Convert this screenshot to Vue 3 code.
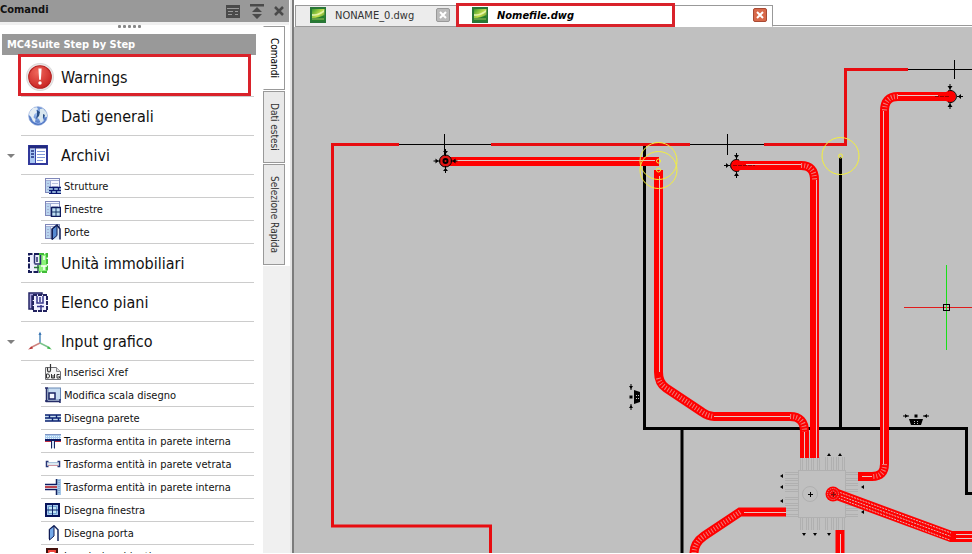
<script setup>
import { ref } from 'vue'

const tree = [
  { label: 'Warnings', icon: 'warning' },
  { label: 'Dati generali', icon: 'globe' },
  {
    label: 'Archivi',
    icon: 'archive',
    children: [
      { label: 'Strutture', icon: 'structures' },
      { label: 'Finestre', icon: 'windows' },
      { label: 'Porte', icon: 'doors' },
    ],
  },
  { label: 'Unità immobiliari', icon: 'units' },
  { label: 'Elenco piani', icon: 'floors' },
  {
    label: 'Input grafico',
    icon: 'axes',
    children: [
      { label: 'Inserisci Xref', icon: 'xref' },
      { label: 'Modifica scala disegno', icon: 'scale' },
      { label: 'Disegna parete', icon: 'wall' },
      { label: 'Trasforma entita in parete interna', icon: 'wall-t' },
      { label: 'Trasforma entità in parete vetrata', icon: 'wall-glass' },
      { label: 'Trasforma entità in parete interna', icon: 'wall-side' },
      { label: 'Disegna finestra', icon: 'window' },
      { label: 'Disegna porta', icon: 'door' },
      { label: 'Inserisci ambienti', icon: 'room' },
    ],
  },
]

const sideTabs = ['Comandi', 'Dati estesi', 'Selezione Rapida']
const activeSide = ref('Comandi')

const stubs = [0, 11, 25, 36]
const bentPipes = [
  'M658.5 170V372Q658.5 383 666 388L702 412Q708 416.5 714 416.5H790Q804.5 416.5 804.5 432V458',
  'M736 165.5H801Q814.5 165.5 814.5 180V458',
  'M950 96.5H898Q884.5 96.5 884.5 111V464Q884.5 476.5 872 476.5H858',
  'M786 512H740L704 536Q694 543 694 553V556',
]
const hatches = [
  'M658.5 378Q660 384 666 388L702 412Q708 416 714 416.5',
  'M790 416.5Q804.5 416.5 804.5 432',
  'M801 165.5Q814.5 165.5 814.5 180',
  'M898 96.5Q884.5 96.5 884.5 111',
  'M884.5 464Q884.5 476.5 872 476.5',
  'M740 512L704 536Q694 543 694 553',
]
const seams = [
  'M456 160.5H655',
  'M659.5 176V372',
  'M714 416.5H790',
  'M804.5 432V458',
  'M746 164.5H801',
  'M816.5 180V458',
  'M898 95.5H938',
  'M883.5 111V464',
  'M862 476.5H872',
  'M744 512.5H786',
]
const alarms = [[658.5, 161], [658.5, 170], [840.5, 156]]
</script>

<template>
  <div class="app">
    <svg class="defs" aria-hidden="true">
      <defs>
        <radialGradient id="gRed" cx=".4" cy=".3" r=".8">
          <stop offset="0" stop-color="#f0685c" /><stop offset="1" stop-color="#c41c1c" />
        </radialGradient>
        <radialGradient id="gSea" cx=".5" cy=".4" r=".6">
          <stop offset="0" stop-color="#a8c8f8" /><stop offset="1" stop-color="#3f68b8" />
        </radialGradient>
        <linearGradient id="gDwg" x1="0" y1="0" x2="1" y2="1">
          <stop offset="0" stop-color="#3a9a2e" /><stop offset=".5" stop-color="#c8e04c" /><stop offset="1" stop-color="#1c7428" />
        </linearGradient>
      </defs>
      <symbol id="i-warning" viewBox="0 0 26 26">
        <circle cx="13" cy="13" r="12.5" fill="#ebe9e9" stroke="#dcdada" />
        <circle cx="13" cy="13" r="10.5" fill="url(#gRed)" stroke="#b52222" />
        <path d="M11.5 5h3l-.7 10.5h-1.6z" fill="#fff" /><circle cx="13" cy="18.5" r="1.6" fill="#fff" />
      </symbol>
      <symbol id="i-globe" viewBox="0 0 20 20">
        <circle cx="10" cy="10" r="9.3" fill="url(#gSea)" stroke="#8ba6dc" stroke-width=".7" />
        <path d="M1.5 6L5 2l4-.8 1 2-2 1 1 2-2.5 2-1 3 2 2-.5 3-2-1L3 11 1 9z" fill="#e4edf4" />
        <path d="M12 3l3-.5 3.5 4 .8 4-2 1-1.5-3-1 3 1 3-3 3-1.5-4-2-2 .5-4 2-1z" fill="#d8e6ee" />
        <path d="M9 4l3 2-1 4-3 3 1-4zM15 8l2 1-2 4z" fill="#294f86" />
        <path d="M3 14q7 6 14 0-6 7-14 0z" fill="#b5ccff" />
      </symbol>
      <symbol id="i-archive" viewBox="0 0 20 20">
        <rect x="1" y="1" width="18" height="18" fill="#fff" stroke="#31399b" stroke-width="2" />
        <path d="M1 2h18" stroke="#20297e" stroke-width="3" />
        <rect x="2" y="4" width="5" height="14" fill="#a9c8f3" /><path d="M7.5 3v15" stroke="#3948aa" />
        <path d="M3 6h3M3 9h3M3 12h3" stroke="#213083" stroke-width="1.5" />
        <path d="M9 6.5h8M9 9.5h8M9 12.5h8M9 15.5h6" stroke="#829bda" />
      </symbol>
      <symbol id="i-sheet" viewBox="0 0 16 16">
        <rect x=".5" y=".5" width="14" height="14" fill="#f7f8ff" stroke="#7f87b9" />
        <rect x="1" y="3" width="4" height="11" fill="#b9d4ee" />
        <path d="M1 2.5h13M5.5 2v12M2 5.5h2M2 8.5h2M2 11.5h2" stroke="#a3aed4" />
        <path d="M7 5.5h6M7 8.5h6" stroke="#bac3df" />
      </symbol>
      <symbol id="i-structures" viewBox="0 0 16 16">
        <use href="#i-sheet" /><path d="M4 9h12v6H4z" fill="#b9dcf5" />
        <path d="M4 9.5h12M4 12.5h12M4 15.5h12M8.5 9v3M13.5 9v3M6.5 12v3M11.5 12v3" stroke="#0c1970" stroke-width="1.4" />
      </symbol>
      <symbol id="i-windows" viewBox="0 0 16 16">
        <use href="#i-sheet" /><rect x="6.5" y="6.5" width="9" height="9" fill="#bfdef2" stroke="#101c5c" stroke-width="1.5" />
        <path d="M11 7v8M7 11h8" stroke="#183768" />
      </symbol>
      <symbol id="i-doors" viewBox="0 0 16 16">
        <use href="#i-sheet" /><path d="M7 15.5V5l5-4 3 4v10.5" fill="#dfe9f7" stroke="#111d54" stroke-width="1.5" />
        <path d="M7.5 5L12 1.5v10L7.5 15.5z" fill="#5689d1" stroke="#111d54" />
      </symbol>
      <symbol id="i-units" viewBox="0 0 20 20">
        <path d="M1 1h10v18H1z" fill="#eef0ff" /><path d="M11 1h8v18h-8z" fill="#8cf37a" />
        <path d="M11 1H1v18h10" fill="none" stroke="#171c58" stroke-width="2" stroke-dasharray="5 1.5" />
        <path d="M11 1h8v18h-8" fill="none" stroke="#41bb38" stroke-width="2" stroke-dasharray="5 1.5" />
        <path d="M6.500 2v8.500M9 4v5M12.500 2v9H6.500" stroke="#292f70" stroke-width="1.500" fill="none" />
        <path d="M10 12v6M6 14.500h5" stroke="#27733a" stroke-width="1.500" />
        <path d="M16 3v4M13 13h6M16 13v4" stroke="#fff" stroke-width="1.5" />
      </symbol>
      <symbol id="i-floors" viewBox="0 0 20 20">
        <path d="M1 1h13v3H4v13H1z" fill="#a8a1dd" stroke="#252665" stroke-width="1.5" />
        <rect x="5" y="3" width="14" height="16" fill="#f1f1ff" stroke="#22225f" stroke-width="2" stroke-dasharray="4 1" />
        <path d="M9 4v7h6V4M12 5v5M13 13v5M9 14.500h7" fill="none" stroke="#38388c" stroke-width="1.500" />
      </symbol>
      <symbol id="i-axes" viewBox="0 0 26 20">
        <path d="M13 12V2" stroke="#4f89bd" stroke-width="1.5" /><path d="M11.5 4L13 .5 14.500 4z" fill="#3f78b4" />
        <path d="M13 12L3 17" stroke="#cf8580" stroke-width="1.5" /><path d="M1 18.5l4-3 1 2z" fill="#b83030" />
        <path d="M13 12l10 5" stroke="#7cc48c" stroke-width="1.5" /><path d="M25 18.5l-4-3-1 2z" fill="#3cb548" />
      </symbol>
      <symbol id="i-xref" viewBox="0 0 16 16">
        <path d="M.5 3.5h11l4 4v8H.5z" fill="#f5f5f5" stroke="#6e6e72" />
        <path d="M11.5 3.5v4h4" fill="#ddd" stroke="#88888c" />
        <path d="M5.5 0v6q0 2-1.5 2t-1.5-2V3.5" fill="none" stroke="#333" stroke-width="1.2" />
        <path d="M1.5 10v4H3q1.500 0 1.500-2T3 10zM6.500 10v4h3v-4M8 11v3M14.500 10.500H12V14h2.500v-1.500H13.500" fill="none" stroke="#333" />
      </symbol>
      <symbol id="i-scale" viewBox="0 0 16 16">
        <rect x="3" y="1" width="12.5" height="12" fill="#c7dcf1" stroke="#6987b4" />
        <path d="M1.5 1v13.5H15M0 1h3M0 14h3M15 12v4" stroke="#252d69" stroke-width="1.5" fill="none" />
        <rect x="4" y="6" width="6" height="6" fill="#f4f8ff" stroke="#1b2463" stroke-width="1.5" />
      </symbol>
      <symbol id="i-wall" viewBox="0 0 16 16">
        <path d="M0 5h16v6H0z" fill="#c5dcef" />
        <path d="M0 5h16M0 8h16M0 11h16M4.5 5v3M11.5 5v3M7.5 8v3M13.5 8v3" stroke="#0b2272" stroke-width="1.4" />
      </symbol>
      <symbol id="i-wall-t" viewBox="0 0 16 16">
        <path d="M0 1h16v6H0z" fill="#a8cbec" /><path d="M0 1.500h16" stroke="#7d93c4" />
        <path d="M1 3.500h15M1 5.500h15" stroke="#e9f6ff" stroke-dasharray="1 1" />
        <path d="M0 7h16" stroke="#0b1963" stroke-width="2" /><path d="M0 8.500h6M10 8.500h6" stroke="#c02d41" />
        <path d="M6.5 8v7.500M9.5 8v7.500" stroke="#17235f" /><path d="M8 8v7" stroke="#a5c7ed" />
      </symbol>
      <symbol id="i-wall-glass" viewBox="0 0 16 16">
        <path d="M3 6.5h10" stroke="#a9c4dc" /><path d="M3 8h10" stroke="#dce8ef" stroke-width="2" /><path d="M3 9.5h10" stroke="#cf929f" />
        <path d="M3.500 5.500H1.500v5h2M12.500 5.500h2v5h-2" fill="none" stroke="#283778" stroke-width="1.500" />
      </symbol>
      <symbol id="i-wall-side" viewBox="0 0 16 16">
        <path d="M12 0h4v16h-4z" fill="#a5c6e7" /><path d="M11.5 0v6M11.5 10v6" stroke="#14235f" stroke-width="1.5" />
        <path d="M14 1v14" stroke="#5d8ac1" stroke-dasharray="1 1" />
        <path d="M0 5.5h12M0 10.5h12" stroke="#0c1a63" stroke-width="1.5" /><path d="M0 8h12" stroke="#bd4650" stroke-width="2" />
      </symbol>
      <symbol id="i-window" viewBox="0 0 16 16">
        <rect x="1" y="2" width="13" height="12" fill="#a6c9ee" stroke="#07145b" stroke-width="2" />
        <path d="M3.500 4.500h8v7h-8z" fill="#c4e6f6" stroke="#6b9fd0" />
        <path d="M7.500 3v10M2 8h11" stroke="#0c2368" />
      </symbol>
      <symbol id="i-door" viewBox="0 0 16 16">
        <path d="M4.5 14V4.5L9 .8l4 4V16" fill="#fff" stroke="#17275d" stroke-width="1.5" />
        <path d="M4.5 4.5L9 1v10l-4.5 4z" fill="#75aaea" stroke="#111c55" />
      </symbol>
      <symbol id="i-room" viewBox="0 0 16 16">
        <rect x="2" y="1" width="10" height="13" fill="#ee463c" stroke="#44100c" stroke-width="2" /><rect x="4.500" y="4" width="5" height="6" fill="#fff" />
      </symbol>
      <symbol id="i-dwg" viewBox="0 0 16 16">
        <rect width="16" height="16" fill="#287637" /><rect x="2" y="2" width="12.5" height="12" fill="url(#gDwg)" />
        <path d="M2 7q6 1 12-4v2Q9 9 2 9z" fill="#effac0" opacity=".8" /><path d="M2 11q7 0 12.5-3v6H2z" fill="#267f2b" /><path d="M2 12h12" stroke="#9fc15e" />
      </symbol>
      <symbol id="valve" viewBox="-14 -14 28 28">
        <path d="M-12 0h7M5 0h7M0 -12v7M0 5v7" stroke="#000" />
        <path d="M-10 -2.5l3 2.5-3 2.5zM10 -2.5L7 0l3 2.5zM-2.5 -10L0 -7l2.5-3zM-2.5 10L0 7l2.5 3z" fill="#000" />
      </symbol>
      <symbol id="radiator" viewBox="-13 -7 26 14">
        <path d="M-7 -1H7L5 5H-5z" fill="#000" /><path d="M-1.5 -5.5h3v3h-3z" />
        <path d="M-13 -4h6M7 -4h6" stroke="#000" /><path d="M-11 -6l3 2-3 2zM11 -6L8 -4l3 2z" />
        <path d="M-2 1.5h1M1 1.5h1M-2 3.5h1M1 3.5h1" stroke="#c0c0c0" />
      </symbol>
    </svg>

    <aside class="panel">
      <header class="panel-head">
        <h1>Comandi</h1>
        <button type="button" aria-label="Layout">
          <svg width="14" height="13"><path d="M0 0h14v13H0z" fill="#4a4a4a" /><path d="M1 3.5h12M2 6.5h5M2 9.5h4M9 6.5h3M9 9.5h3" stroke="#999" /></svg>
        </button>
        <button type="button" aria-label="Comprimi">
          <svg width="14" height="15"><path d="M0 0h14v2.5H0zM7 3l5 5H2zM2 10h10l-5 5z" fill="#4a4a4a" /></svg>
        </button>
        <button type="button" aria-label="Chiudi pannello">
          <svg width="10" height="10"><path d="M1 1l8 8M9 1L1 9" stroke="#4a4a4a" stroke-width="2.5" /></svg>
        </button>
      </header>
      <div class="panel-body">
        <div class="commands">
          <div class="grip"><i v-for="n in 5" :key="n"></i></div>
          <h2>MC4Suite Step by Step</h2>
          <ul class="tree">
            <li v-for="node in tree" :key="node.label">
              <button type="button" class="node" :class="{ marked: node.icon === 'warning' }">
                <span class="caret" :class="{ open: node.children }"></span>
                <span class="node-main">
                  <span class="icon-box">
                    <svg class="icon" :class="node.icon"><use :href="'#i-' + node.icon" /></svg>
                  </span>
                  <span>{{ node.label }}</span>
                </span>
              </button>
              <ul v-if="node.children" class="leaves">
                <li v-for="leaf in node.children" :key="leaf.icon">
                  <button type="button" class="leaf">
                    <svg width="16" height="16"><use :href="'#i-' + leaf.icon" /></svg>
                    <span>{{ leaf.label }}</span>
                  </button>
                </li>
              </ul>
            </li>
          </ul>
        </div>
        <nav class="side-tabs">
          <button
            v-for="tab in sideTabs"
            :key="tab"
            type="button"
            :class="{ active: tab === activeSide }"
            @click="activeSide = tab"
          >{{ tab }}</button>
          <div class="side-rest"></div>
        </nav>
      </div>
    </aside>

    <main class="work">
      <div class="file-tabs">
        <div class="file">
          <svg width="16" height="16"><use href="#i-dwg" /></svg>
          <button type="button" class="file-name">NONAME_0.dwg</button>
          <button type="button" class="close" aria-label="Chiudi NONAME_0.dwg">
            <svg width="8" height="8"><path d="M1 1l6 6M7 1L1 7" stroke="#fff" stroke-width="2" /></svg>
          </button>
        </div>
        <div class="file current">
          <svg width="16" height="16"><use href="#i-dwg" /></svg>
          <button type="button" class="file-name">Nomefile.dwg</button>
          <button type="button" class="close" aria-label="Chiudi Nomefile.dwg">
            <svg width="8" height="8"><path d="M1 1l6 6M7 1L1 7" stroke="#fff" stroke-width="2" /></svg>
          </button>
        </div>
        <div class="file-rest"></div>
      </div>
      <div class="canvas">
        <svg class="drawing" viewBox="294 27 678 526" preserveAspectRatio="xMinYMin slice" role="img" aria-label="Disegno">
          <!-- internal walls -->
          <path d="M644.5 146V428.5H966.5V493.5H974M682 429V556M840.5 157V428" fill="none" stroke="#000" stroke-width="3" />
          <!-- external walls and openings -->
          <path d="M399 144.5H332.5V526H490.5V556M491 144.5H690M764 144.5H845.5V69.5H908" fill="none" stroke="#e80c10" stroke-width="3" />
          <path d="M399 144.5H491M690 144.5H764M908 69.5H974M444.5 134V155M727.5 134V155M954.5 60V79" stroke="#000" />

          <!-- manifold -->
          <g fill="none" stroke="#b0b0b0">
            <g v-for="s in stubs" :key="s">
              <path :d="`M${800.5 + s} 457V470M${802.5 + s} 457V470M${806.5 + s} 457V470M${808.5 + s} 457V470`" />
              <path :d="`M${800.5 + s} 518V530M${802.5 + s} 518V530M${806.5 + s} 518V530M${808.5 + s} 518V530`" />
              <path :d="`M785 ${472.5 + s}H798M785 ${474.5 + s}H798M785 ${478.5 + s}H798M785 ${480.5 + s}H798`" />
              <path :d="`M846 ${472.5 + s}H858M846 ${474.5 + s}H858M846 ${478.5 + s}H858M846 ${480.5 + s}H858`" />
              <path :d="`M${802 + s} 456l2 -3 2 3zM${802 + s} 533l2 3 2-3zM783 ${474 + s}l-3 2 3 2zM861 ${476 + s}l3-2v4z`" fill="#000" stroke="none" />
            </g>
            <rect x="798.5" y="470.5" width="47" height="47" fill="#c0c0c0" />
            <circle cx="810" cy="494" r="7.5" />
            <path d="M808 494.5h5M810.5 492v5" stroke="#000" />
          </g>

          <!-- pipes -->
          <g fill="none" stroke="#f00" stroke-width="9">
            <path d="M447 161.5H659" />
            <path v-for="p in bentPipes" :key="p" :d="p" />
            <path d="M840 530V556" />
            <path d="M833 493L951 536.5H974" stroke-width="11" />
          </g>
          <g fill="none" stroke="#e6c4c0">
            <path v-for="s in seams" :key="s" :d="s" /><path d="M840.5 534V556M956 534.5H974M956 538.5H974" />
          </g>
          <g fill="none" stroke="#e8b0ac" stroke-width="5" stroke-dasharray="1 2" opacity=".7">
            <path v-for="h in hatches" :key="h" :d="h" />
          </g>
          <g fill="none" stroke="#dfb5b2" stroke-dasharray="2 1">
            <path d="M840 492.5L951 533M838 495L951 536.5M838 498L950 540" />
          </g>
          <circle cx="833" cy="494" r="7.5" fill="#f00" />
          <g fill="none" stroke="#d5a5a5" stroke-dasharray="1 1"><circle cx="833" cy="494" r="5.5" /><circle cx="833" cy="494" r="3" /></g>
          <path d="M831 494.5h5M833.5 492v5" stroke="#801010" />

          <!-- valves -->
          <g fill="#e01414" stroke="#000">
            <circle cx="445.5" cy="161" r="6" /><circle cx="445.5" cy="161" r="2" stroke-width="2" />
          </g>
          <g fill="#f00">
            <circle cx="736.5" cy="165.5" r="6" /><circle cx="950" cy="96.5" r="6" />
          </g>
          <path d="M739 160a6 6 0 1 0 0 11M948 91a6 6 0 1 1 0 11" fill="none" stroke="#000" />
          <path d="M733 165.5h22M935 96.5h14" stroke="#900" stroke-dasharray="4 1" />
          <use href="#valve" x="431.5" y="147" width="28" height="28" />
          <path d="M724 165.5h6M736.5 153v6M736.5 172v6M950 84v6M950 103v6M957 96.5h6" stroke="#000" />
          <path d="M726 163l3 2.5-3 2.5zM734 155h5l-2.5 3.5zM734 176h5l-2.5-3.5zM947.5 86h5l-2.5 3.5zM947.5 107h5l-2.5-3.5zM961 94l-3 2.5 3 2.5z" />

          <!-- collision markers -->
          <g fill="none" stroke="#f4f03c">
            <g v-for="(a, i) in alarms" :key="i">
              <circle :cx="a[0]" :cy="a[1]" r="18.5" /><circle :cx="a[0]" :cy="a[1]" r="2" />
            </g>
          </g>

          <!-- radiators -->
          <use href="#radiator" x="903" y="413" width="26" height="14" />
          <g transform="translate(635 397) rotate(-90)"><use href="#radiator" x="-13" y="-7" width="26" height="14" /></g>

          <!-- cursor -->
          <path d="M904 307h70v1h-70z" fill="#e01c1c" /><path d="M946 265h1v85h-1z" fill="#18e018" />
          <rect x="943.5" y="304.5" width="6" height="6" fill="none" stroke="#000" />
        </svg>
      </div>
    </main>
  </div>
</template>

<style>
body { margin: 0; }
</style>

<style scoped>
.app {
  display: flex;
  height: 100vh;
  overflow: hidden;
  box-sizing: border-box;
  border-bottom: 1px solid #fff;
  background: #fff;
  font-family: "DejaVu Sans Condensed", "DejaVu Sans", sans-serif;
  font-stretch: condensed;
  font-size: 11px;
  color: #111;
}
.defs { position: absolute; width: 0; height: 0; }
ul { list-style: none; margin: 0; padding: 0; }
button {
  border: 0;
  padding: 0;
  background: none;
  font: inherit;
  color: inherit;
  text-align: left;
  white-space: nowrap;
}
svg { flex: none; display: block; }

.panel {
  flex: none;
  width: 290px;
  display: flex;
  flex-direction: column;
}
.panel-head {
  display: flex;
  align-items: center;
  gap: 10px;
  height: 22px;
  margin-right: 1px;
  padding-right: 5px;
  background: #999;
  border-bottom: 3px solid #f0f0f0;
}
.panel-head h1 {
  flex: 1;
  margin: 0;
  font-size: 11px;
  line-height: 18px;
  padding-bottom: 2px;
}
.panel-body { flex: 1; display: flex; min-height: 0; }
.commands { flex: 1; min-width: 0; overflow: hidden; }
.grip {
  display: flex;
  justify-content: center;
  gap: 2px;
  height: 3px;
  padding: 0 4px 6px 0;
}
.grip i { width: 3px; height: 3px; border-radius: 1px; background: #888; }
.commands h2 {
  margin: 0 7px 3px 2px;
  padding-left: 5px;
  background: #999;
  color: #fff;
  font-size: 11px;
  line-height: 21px;
}
.tree { padding: 0 9px 0 0; }
.node {
  position: relative;
  display: flex;
  align-items: center;
  width: 100%;
  height: 39px;
  font-size: 16px;
}
.caret { width: 21px; display: flex; flex: none; }
.caret.open::before {
  content: "";
  margin-left: 7px;
  border: 4px solid transparent;
  border-top-color: #808080;
  border-bottom: 0;
}
.node-main {
  flex: 1;
  display: flex;
  align-items: center;
  gap: 4px;
  height: 38px;
  padding-left: 2px;
  border-bottom: 1px solid #ccc;
}
.icon-box { display: flex; justify-content: center; width: 34px; }
.icon { width: 20px; height: 20px; margin-right: 4px; }
.icon.warning { width: 28px; height: 28px; margin-right: 0; }
.icon.axes { width: 26px; margin-right: 0; }
.marked::after {
  content: "";
  position: absolute;
  left: 18px;
  right: 3px;
  top: -4px;
  bottom: 1px;
  border: 3px solid #d9222a;
}
.leaf {
  display: flex;
  align-items: center;
  gap: 3px;
  box-sizing: border-box;
  width: 100%;
  height: 23px;
  padding-left: 4px;
  border-bottom: 1px solid #ccc;
}
.leaves { padding-left: 41px; }

.side-tabs {
  flex: none;
  width: 27px;
  display: flex;
  flex-direction: column;
  align-items: flex-start;
  gap: 1px;
  padding-top: 1px;
}
.side-tabs button {
  writing-mode: vertical-rl;
  width: 22px;
  padding: 11px 0;
  border: 1px solid #999;
  background: #e9e9e9;
  font-size: 10px;
  line-height: 18px;
  color: #333;
}
.side-tabs button.active { background: #fff; border-left-color: #fff; color: #000; }
.side-rest { flex: 1; width: 100%; background: #f0f0f0; }

.work {
  flex: 1;
  min-width: 0;
  display: flex;
  flex-direction: column;
  border-left: 2px solid #e4e4e4;
  box-shadow: inset 2px 0 #7c7c7c;
  padding-left: 2px;
}
.file-tabs {
  flex: none;
  display: flex;
  align-items: stretch;
  height: 22px;
  padding: 5px 0 0 1px;
  background: #fff;
}
.file {
  position: relative;
  display: flex;
  align-items: center;
  box-sizing: border-box;
  width: 162px;
  padding: 0 6px 2px 14px;
  border: 1px solid #999;
  background: #ececec;
  color: #333;
}
.file-name { flex: 1; padding-left: 9px; }
.file.current {
  width: 316px;
  background: #fff;
  border-bottom-color: #fff;
  border-left: 0;
  padding-left: 15px;
  padding-right: 5px;
  color: #000;
  font-weight: bold;
  font-style: italic;
}
.file.current::after {
  content: "";
  position: absolute;
  left: -1px;
  top: -3px;
  bottom: -1px;
  width: 213px;
  border: 3px solid #d9222a;
  pointer-events: none;
}
.close {
  display: flex;
  align-items: center;
  justify-content: center;
  width: 14px;
  height: 14px;
  box-sizing: border-box;
  border: 1px solid #999;
  border-radius: 2px;
  background: #bbb;
}
.current .close { border-color: #a84a34; background: #d8694a; }
.file-rest { flex: 1; border-bottom: 1px solid #999; margin-bottom: 1px; }
.canvas { flex: 1; min-height: 0; background: #c0c0c0; }
.drawing { width: 100%; height: 100%; }
</style>
